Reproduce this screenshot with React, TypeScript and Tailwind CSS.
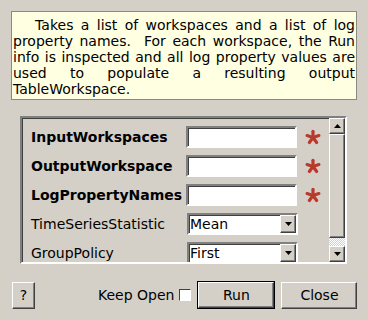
import React from "react";

const FONT = { fontFamily: '"DejaVu Sans", "Liberation Sans", sans-serif' };

const raised =
	"border border-t-white border-l-white border-b-[#404040] border-r-[#404040] shadow-[inset_-1px_-1px_0_#808080] bg-[#d4d0c8]";
const sunken =
	"border-2 border-t-[#808080] border-l-[#808080] border-b-white border-r-white shadow-[inset_1px_1px_0_#404040]";

function Star() {
	const arms = [-90, -18, 54, 126, 198];
	return (
		<svg width="16" height="16" viewBox="-8 -8 16 16">
			{arms.map((a) => {
				const r = (a * Math.PI) / 180;
				return (
					<line
						key={a}
						x1="0"
						y1="0.5"
						x2={(Math.cos(r) * 6.2).toFixed(2)}
						y2={(Math.sin(r) * 6.2 + 0.5).toFixed(2)}
						stroke="#b83a2c"
						strokeWidth="3.2"
						strokeLinecap="round"
					/>
				);
			})}
		</svg>
	);
}

function Arrow({ up }: { up?: boolean }) {
	return (
		<svg width="7" height="4" viewBox="0 0 7 4">
			<path d={up ? "M0 4 L3.5 0 L7 4 Z" : "M0 0 L7 0 L3.5 4 Z"} fill="#000" />
		</svg>
	);
}

function TextRow({ label }: { label: string }) {
	return (
		<div className="flex items-center h-[22px]">
			<div className="w-[156px] text-[14px] font-bold text-black whitespace-nowrap">{label}</div>
			<div className={`w-[111px] h-[22px] bg-white ${sunken}`} />
			<div className="w-[32px] flex justify-center">
				<Star />
			</div>
		</div>
	);
}

function ComboRow({ label, value }: { label: string; value: string }) {
	return (
		<div className="flex items-center h-[22px]">
			<div className="w-[156px] text-[14px] text-black whitespace-nowrap">{label}</div>
			<div className={`w-[111px] h-[22px] bg-white flex items-center ${sunken}`}>
				<span className="flex-1 pl-[1px] text-[14px] text-black">{value}</span>
				<div className={`w-[16px] h-[18px] flex items-center justify-center ${raised}`}>
					<Arrow />
				</div>
			</div>
		</div>
	);
}

export default function App() {
	return (
		<div className="w-[368px] h-[320px] bg-[#d4d0c8] overflow-hidden" style={FONT}>
			<div className="ml-[11px] mt-[11px] w-[346px] h-[89px] bg-[#ffffe1] border border-[#8a8a80] px-[1px] pt-[5px]">
				<p className="text-[14px] leading-[16px] text-black text-justify">
					&nbsp;&nbsp;&nbsp;Takes a list of workspaces and a list of log property names.&nbsp; For each workspace, the Run info is
					inspected and all log property values are used to populate a resulting output TableWorkspace.
				</p>
			</div>

			<div className={`ml-[20px] mt-[16px] w-[327px] h-[148px] flex ${sunken}`}>
				<div className="flex-1 overflow-hidden pl-[9px] pt-[8px] flex flex-col gap-[7px]">
					<TextRow label="InputWorkspaces" />
					<TextRow label="OutputWorkspace" />
					<TextRow label="LogPropertyNames" />
					<ComboRow label="TimeSeriesStatistic" value="Mean" />
					<ComboRow label="GroupPolicy" value="First" />
				</div>
				<div className="w-[16px] flex flex-col">
					<div className={`h-[16px] flex items-center justify-center ${raised}`}>
						<Arrow up />
					</div>
					<div className={`flex-1 ${raised}`} />
					<div className="h-[8px] bg-[repeating-conic-gradient(#ffffff_0_25%,#d4d0c8_0_50%)] bg-[length:2px_2px]" />
					<div className={`h-[16px] flex items-center justify-center ${raised}`}>
						<Arrow />
					</div>
				</div>
			</div>

			<div className="mt-[17px] flex items-center h-[28px]">
				<button className={`ml-[12px] w-[23px] h-[27px] text-[14px] text-black ${raised}`}>?</button>
				<span className="ml-[63px] text-[14px] text-black whitespace-nowrap">Keep Open</span>
				<div className="ml-[5px] w-[12px] h-[12px] bg-white border border-t-[#404040] border-l-[#404040] border-b-white border-r-white" />
				<div className="ml-[6px] w-[78px] h-[28px] border border-black">
					<button className={`w-full h-full text-[14px] text-black ${raised}`}>Run</button>
				</div>
				<button className={`ml-[6px] w-[76px] h-[27px] text-[14px] text-black ${raised}`}>Close</button>
			</div>
		</div>
	);
}
